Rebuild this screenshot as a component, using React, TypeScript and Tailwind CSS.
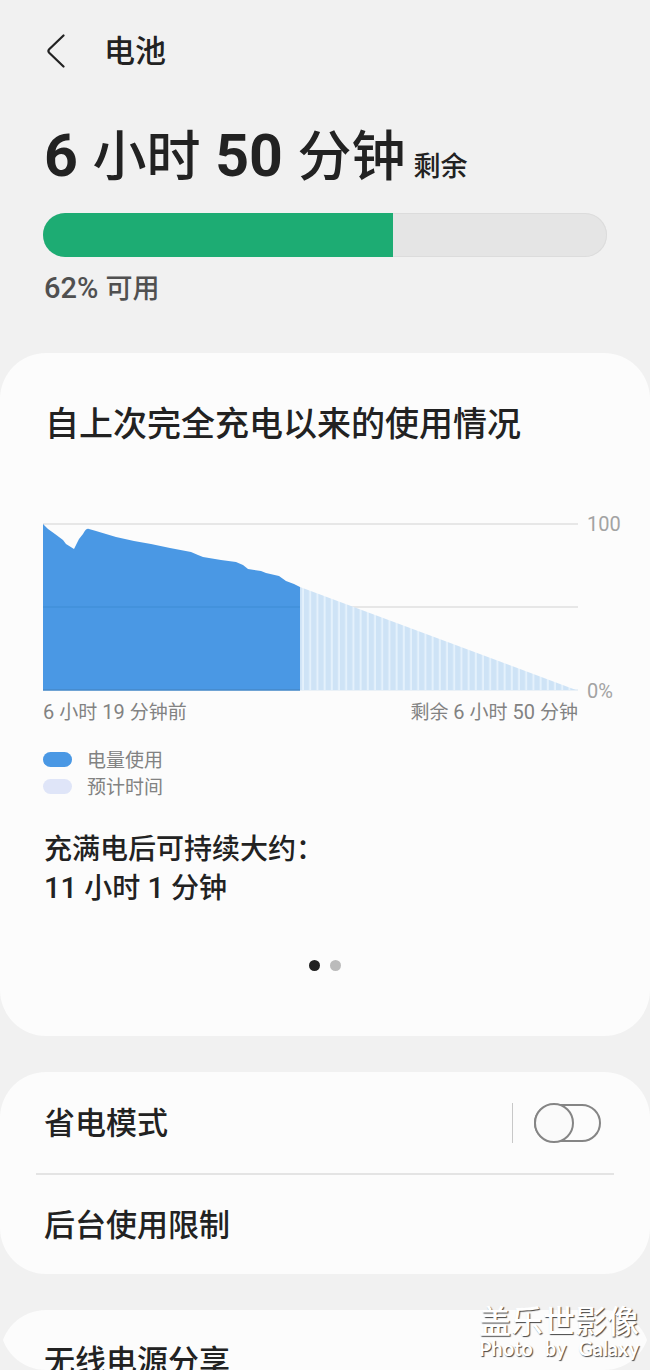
import React, { useState } from 'react';

const FONT = "font-['Roboto','Noto_Sans_CJK_SC',sans-serif]";

// level history, in chart units (535 wide, 100% at y=1, 0% at y=167)
const USED_PATH =
  'M0 167V1L5 6L12 11L20 17L23 21L31 26L34 20L36 16L40 11Q43 5 46 6L53 8L63 11L73 14L91 18L108 21L127 25L148 29L155 32L160 34L178 37L193 39L200 42L205 46L218 48L223 50L236 53L243 58L251 61L257 64V167Z';

interface MixedTextProps {
  parts: string[];
  numberClass: string;
}

// latin digits are drawn slightly larger than the chinese glyphs around them
const MixedText: React.FC<MixedTextProps> = ({ parts, numberClass }) => (
  <>
    {parts.map((part, i) => (
      <span key={i} className={/\d/.test(part) ? `${numberClass} whitespace-pre` : ''}>
        {part}
      </span>
    ))}
  </>
);

const UsageChart: React.FC = () => (
  <div className="flex gap-[9px]">
    <svg viewBox="0 0 535 168" className="h-auto min-w-0 flex-1" role="img">
      <defs>
        <pattern id="stripes" x="261" width="7.2" height="168" patternUnits="userSpaceOnUse">
          <rect width="7.2" height="168" fill="#e4f1fc" />
          <rect width="5.2" height="168" fill="#cee3f6" />
        </pattern>
      </defs>
      <path d="M0 1H535M0 84H535" stroke="#e0e0e0" strokeWidth="1.6" />
      <path d="M0 167H535" stroke="#e4eef6" strokeWidth="1.4" />
      <path d="M257 64L533 167H257Z" fill="url(#stripes)" />
      <path d={USED_PATH} fill="#4a98e4" />
      <path d="M0 84H257" stroke="#4290da" strokeWidth="1.4" />
      <path d="M0 167H257" stroke="#4688c8" strokeWidth="1.4" />
    </svg>
    <div className="-mt-[11px] -mb-3 flex w-9 shrink-0 flex-col justify-between text-xl leading-6 text-[#a3a3a3]">
      <span>100</span>
      <span>0%</span>
    </div>
  </div>
);

const LEGEND = [
  { label: '电量使用', color: 'bg-[#4a98e4]' },
  { label: '预计时间', color: 'bg-[#dfe5f8]' },
];

const App: React.FC = () => {
  const [powerSaving, setPowerSaving] = useState(false);

  return (
    <div className={`relative min-h-screen overflow-hidden bg-[#f1f1f1] text-[#222] ${FONT}`}>
      <header className="flex h-[102px] items-center gap-[38px] pl-[46px]">
        <button type="button" aria-label="返回">
          <svg width="20" height="34" viewBox="0 0 20 34" fill="none" className="block">
            <path
              d="M17.5 1.5L3.2 15.2Q1.6 17 3.2 18.8L17.5 32.5"
              stroke="#222"
              strokeWidth="2.2"
              strokeLinecap="round"
            />
          </svg>
        </button>
        <h1 className="pt-0.5 text-[31px] leading-10 font-medium">电池</h1>
      </header>

      <section className="px-[43px]">
        <div className="flex h-[111px] items-baseline gap-2 pt-[18px] pl-px">
          <p className="text-[54px] leading-[72px] font-medium">
            <MixedText
              parts={['6 ', '小时', ' 50 ', '分钟']}
              numberClass="text-[59px] leading-[72px] font-bold"
            />
          </p>
          <p className="text-[27px] leading-10 font-medium">剩余</p>
        </div>
        <div className="h-11 overflow-hidden rounded-full bg-[#e5e5e5] shadow-[inset_0_0_0_1px_#dcdcdc]">
          <div className="h-11 w-[62%] bg-[#1dac73]" />
        </div>
        <p className="mt-[11px] pl-px text-[27px] leading-10 font-medium text-[#505050]">
          <MixedText parts={['62% ', '可用']} numberClass="text-[29px]" />
        </p>
      </section>

      <section className="mt-[44px] h-[683px] rounded-[46px] bg-[#fcfcfc] pt-[46px] pr-[27px] pl-[43px]">
        <h2 className="pl-0.5 text-[34px] leading-[50px] font-medium">
          自上次完全充电以来的使用情况
        </h2>
        <div className="mt-[74px]">
          <UsageChart />
        </div>
        <div className="mt-[6px] mr-[45px] flex justify-between text-[19px] leading-8 text-[#828282]">
          <span>
            <MixedText parts={['6 ', '小时', ' 19 ', '分钟前']} numberClass="text-xl" />
          </span>
          <span>
            <MixedText parts={['剩余', ' 6 ', '小时', ' 50 ', '分钟']} numberClass="text-xl" />
          </span>
        </div>
        <ul className="mt-[18px] text-[19px] leading-[26px] text-[#828282]">
          {LEGEND.map((item) => (
            <li key={item.label} className="flex items-start gap-[15px]">
              <span className={`mt-[5px] h-[15px] w-[29px] rounded-full ${item.color}`} />
              <span className="pt-px">{item.label}</span>
            </li>
          ))}
        </ul>
        <p className="mt-[30px] pl-px text-[28px] leading-[38px] font-medium">
          充满电后可持续大约：
          <br />
          <MixedText parts={['11 ', '小时', ' 1 ', '分钟']} numberClass="text-[29px]" />
        </p>
        <div className="mt-[52px] mr-4 flex justify-center gap-[10px]">
          <span className="size-[11px] rounded-full bg-[#222]" />
          <span className="size-[11px] rounded-full bg-[#bbb]" />
        </div>
      </section>

      <section className="mt-9 rounded-[46px] bg-[#fcfcfc] px-9 text-[31px] font-medium">
        <div className="flex h-[103px] items-center border-b-2 border-[#e4e4e4] pr-[13px] pl-2">
          <label htmlFor="power-saving" className="flex-1 pt-1">
            省电模式
          </label>
          <span className="mr-[21px] h-10 w-px bg-[#c8c8c8]" />
          <input
            id="power-saving"
            type="checkbox"
            role="switch"
            checked={powerSaving}
            onChange={(e) => setPowerSaving(e.target.checked)}
            className="relative h-[38px] w-[67px] appearance-none rounded-full border-2 border-[#858585] before:absolute before:-top-[3px] before:-left-[2px] before:size-10 before:rounded-full before:border-2 before:border-[#858585] before:bg-[#fafafa] checked:bg-[#4a98e4] checked:before:left-[25px]"
          />
        </div>
        <a href="#background-limits" className="flex h-[99px] items-center pt-1 pl-2">
          后台使用限制
        </a>
      </section>

      <section className="mt-9 h-[60px] overflow-hidden rounded-t-[46px]">
        <a
          href="#wireless-power"
          className="block h-[60px] overflow-hidden rounded-b-[46px] bg-[#fcfcfc] pt-[30px] pl-11 text-[31px] leading-[44px] font-medium"
        >
          无线电源分享
        </a>
      </section>

      <div className="absolute right-[11px] bottom-3 flex w-40 flex-col text-white [text-shadow:1px_1px_1px_#444]">
        <p className="text-[32px] leading-8 font-medium">盖乐世影像</p>
        <p className="flex justify-between font-['Lato',sans-serif] text-xl leading-5 font-bold">
          <span>Photo</span> <span>by</span> <span>Galaxy</span>
        </p>
      </div>
    </div>
  );
};

export default App;
